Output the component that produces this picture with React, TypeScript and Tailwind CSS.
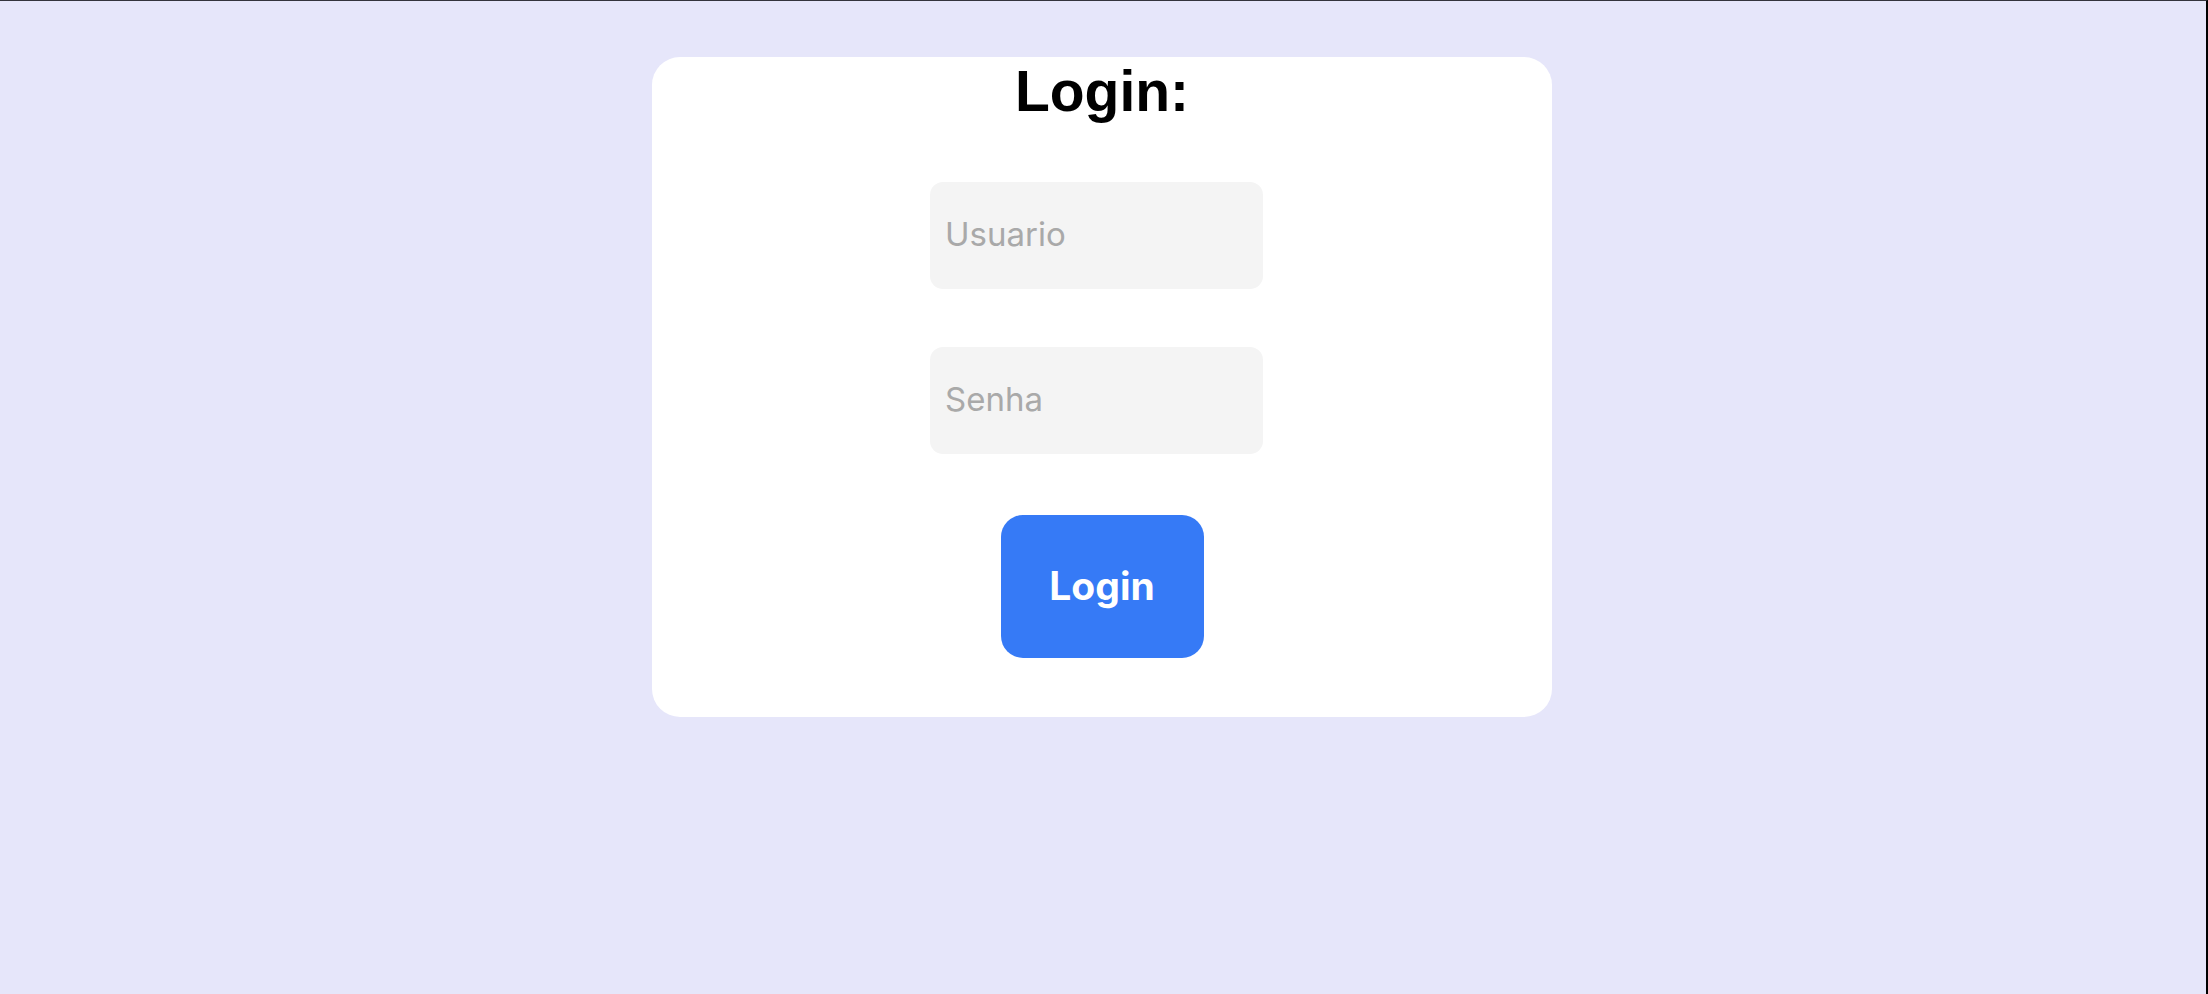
import React from "react";

export default function App() {
  return (
    <div className="h-[994px] w-full overflow-hidden border-t border-t-[#34343c] border-r-2 border-r-black bg-[#e6e6fa]">
      <div className="flex justify-center pt-[56px]">
        <div className="mr-[2px] flex h-[660px] w-[900px] flex-col items-center rounded-[28px] bg-white pt-[3px]">
          <h1 className="h-[63px] font-['Liberation_Sans',Arial,sans-serif] text-[57px] font-bold leading-[63px] text-black">
            Login:
          </h1>
          <input
            type="text"
            placeholder="Usuario"
            className="mt-[59px] mr-[11px] h-[107px] w-[333px] rounded-[13px] bg-[#f4f4f4] pb-[4px] pl-[15px] font-['Inter',sans-serif] text-[33px] text-black outline-none placeholder:text-[#a9a9a9]"
          />
          <input
            type="password"
            placeholder="Senha"
            className="mt-[58px] mr-[11px] h-[107px] w-[333px] rounded-[13px] bg-[#f4f4f4] pb-[4px] pl-[15px] font-['Inter',sans-serif] text-[33px] text-black outline-none placeholder:text-[#a9a9a9]"
          />
          <button
            type="button"
            className="mt-[61px] flex h-[143px] w-[203px] items-center justify-center rounded-[22px] bg-[#367af6] font-['Inter',sans-serif] text-[39px] font-bold text-white"
          >
            Login
          </button>
        </div>
      </div>
    </div>
  );
}
